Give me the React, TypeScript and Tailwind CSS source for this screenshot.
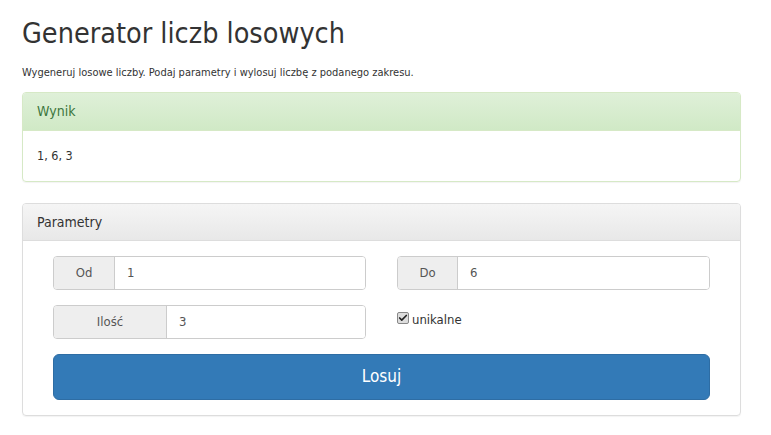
import { Check } from "lucide-react";

const font = { fontFamily: '"DejaVu Sans Condensed", "Liberation Sans Narrow", "Liberation Sans", sans-serif' };

function Field({ label, value, addon }: { label: string; value: string; addon: string }) {
  return (
    <div className="flex h-[34px] overflow-hidden rounded-[4px] border border-[#ccc]">
      <span className={`${addon} flex shrink-0 items-center justify-center border-r border-[#ccc] bg-[#eee] text-[13px] text-[#555]`}>
        {label}
      </span>
      <span className="flex flex-1 items-center bg-white px-3 text-[13px] text-[#555]">{value}</span>
    </div>
  );
}

export default function App() {
  return (
    <div className="min-h-screen bg-white text-[#333]" style={font}>
      <div className="pl-[22px] pr-[30px] pt-[14px]">
        <h1 className="text-[28.5px] leading-[40px] text-[#333]">Generator liczb losowych</h1>
        <p className="mt-[11px] text-[11px] leading-[16px] text-[#333]">
          Wygeneruj losowe liczby. Podaj parametry i wylosuj liczbę z podanego zakresu.
        </p>

        <div className="mt-[11px] rounded-[4px] border border-[#d6e9c6] shadow-[0_1px_1px_rgba(0,0,0,0.05)]">
          <div className="flex h-[38px] items-center rounded-t-[3px] border-b border-[#d6e9c6] bg-[linear-gradient(#dff0d8,#d0e9c6)] px-[14px] text-[14px] text-[#3c763d]">
            Wynik
          </div>
          <div className="flex h-[50px] items-center px-[14px] text-[12.5px]">1, 6, 3</div>
        </div>

        <div className="mt-[21px] rounded-[4px] border border-[#ddd] shadow-[0_1px_1px_rgba(0,0,0,0.05)]">
          <div className="flex h-[37px] items-center rounded-t-[3px] border-b border-[#ddd] bg-[linear-gradient(#f5f5f5,#e8e8e8)] px-[14px] text-[14px] text-[#333]">
            Parametry
          </div>
          <div className="px-[30px] pt-[15px] pb-[15px]">
            <div className="grid grid-cols-2 gap-x-[31px] gap-y-[15px]">
              <Field label="Od" value="1" addon="w-[61px]" />
              <Field label="Do" value="6" addon="w-[60px]" />
              <Field label="Ilość" value="3" addon="w-[113px]" />
              <label className="flex items-start gap-[3px] pt-[5px] text-[13px] text-[#333]">
                <span className="mt-[2px] flex h-[12px] w-[12px] items-center justify-center rounded-[2px] border border-[#888] bg-[#ddd]">
                  <Check size={10} strokeWidth={4} className="text-[#222]" />
                </span>
                unikalne
              </label>
            </div>
            <button className="mt-[15px] flex h-[46px] w-full items-center justify-center rounded-[6px] border border-[#2e6da4] bg-[#337ab7] text-[17px] text-white">
              Losuj
            </button>
          </div>
        </div>
      </div>
    </div>
  );
}
